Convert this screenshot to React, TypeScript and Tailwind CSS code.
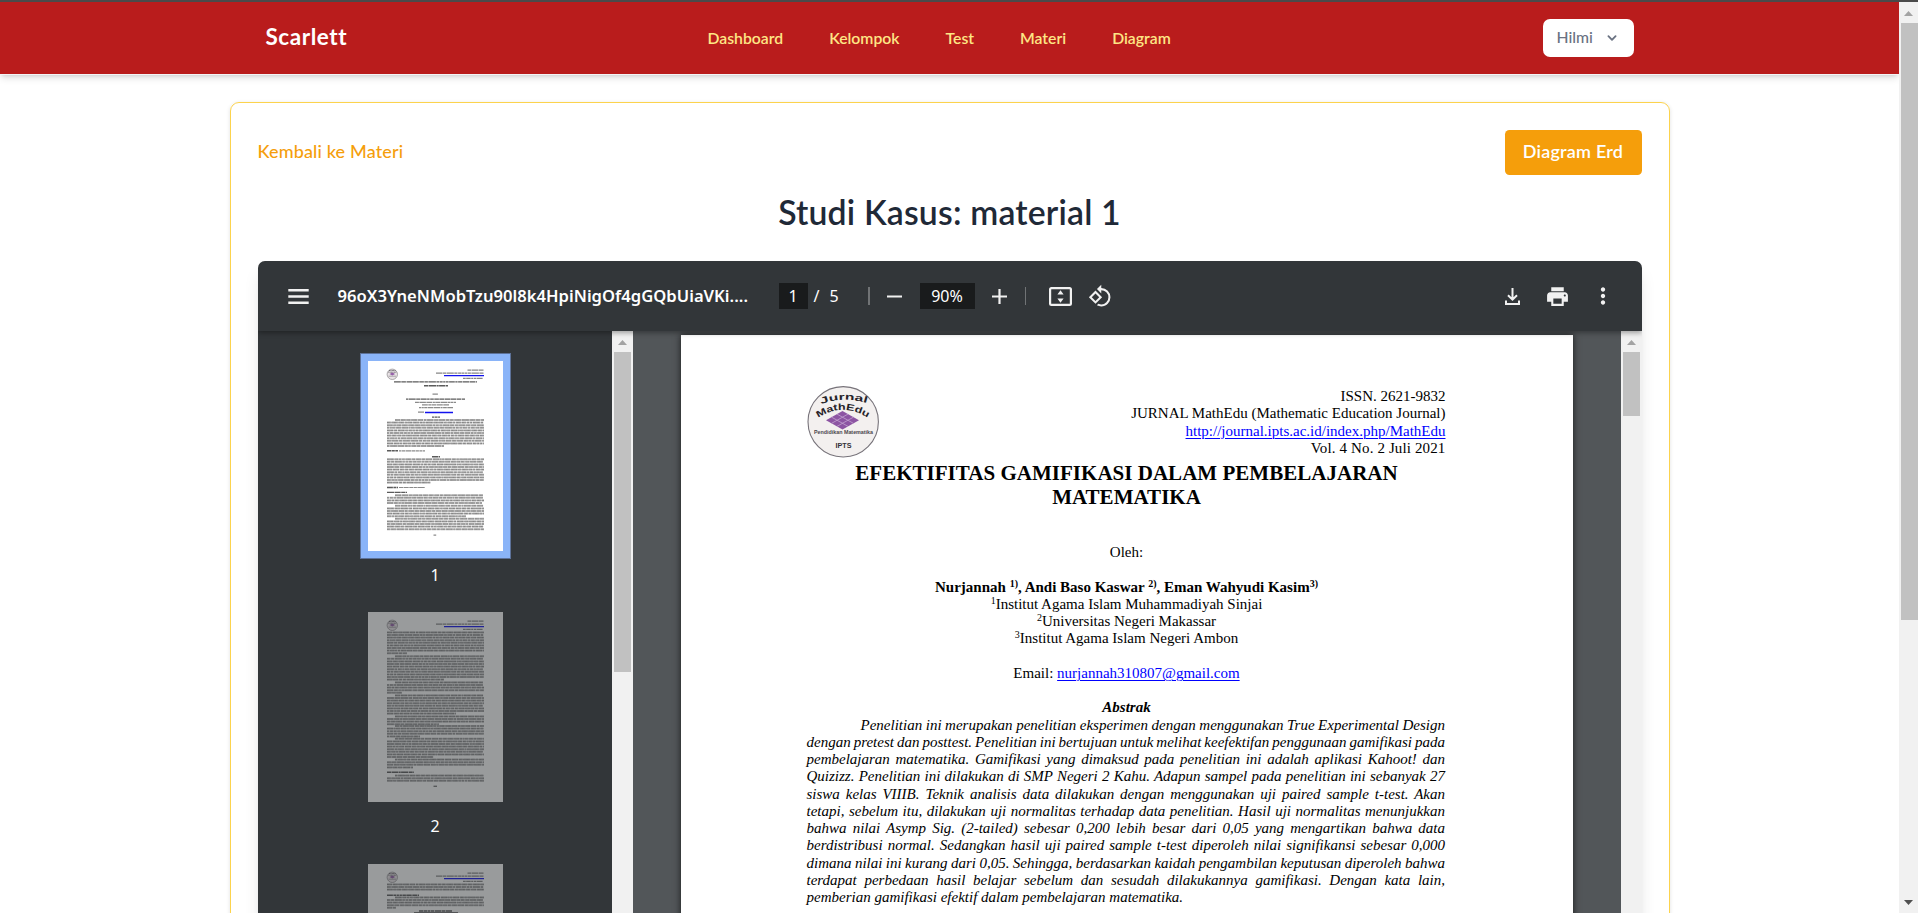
import type { ReactNode } from "react";
import { MdMoreVert, MdPrint, MdRotate90DegreesCcw } from "react-icons/md";

const NAV = ["Dashboard", "Kelompok", "Test", "Materi", "Diagram"];

const ABSTRACT = [
  "dengan pretest dan posttest. Penelitian ini bertujuan untuk melihat keefektifan penggunaan gamifikasi pada",
  "pembelajaran matematika. Gamifikasi yang dimaksud pada penelitian ini adalah aplikasi Kahoot! dan",
  "Quizizz. Penelitian ini dilakukan di SMP Negeri 2 Kahu. Adapun sampel pada penelitian ini sebanyak 27",
  "siswa kelas VIIIB. Teknik analisis data dilakukan dengan menggunakan uji paired sample t-test. Akan",
  "tetapi, sebelum itu, dilakukan uji normalitas terhadap data penelitian. Hasil uji normalitas menunjukkan",
  "bahwa nilai Asymp Sig. (2-tailed) sebesar 0,200 lebih besar dari 0,05 yang mengartikan bahwa data",
  "berdistribusi normal. Sedangkan hasil uji paired sample t-test diperoleh nilai signifikansi sebesar 0,000",
  "dimana nilai ini kurang dari 0,05. Sehingga, berdasarkan kaidah pengambilan keputusan diperoleh bahwa",
  "terdapat perbedaan hasil belajar sebelum dan sesudah dilakukannya gamifikasi. Dengan kata lain,",
];

function Header() {
  return (
    <header className="relative z-10 flex h-[73px] shrink-0 justify-center border-b border-gray-100 bg-[#b91c1c] shadow-[0_4px_7px_-1px_rgba(0,0,0,0.13),0_2px_4px_-2px_rgba(0,0,0,0.13)]">
      <div className="flex w-[1440px] items-center pr-9 pl-9">
        <div className="w-[442px] pb-0.5 text-[22.5px] font-bold tracking-[0.55px] text-white">Scarlett</div>
        <nav className="flex gap-[46px] text-[15.75px] font-semibold text-amber-200">
          {NAV.map((n) => (
            <a key={n}>{n}</a>
          ))}
        </nav>
        <button className="ml-auto flex h-[38px] w-[91px] items-center rounded-[7px] bg-white pb-0.5 pl-[14px] text-left text-[15.75px] font-medium text-gray-500">
          <span className="w-[46px]">Hilmi</span>
          <svg viewBox="0 0 20 20" className="mt-0.5 size-[18px] fill-gray-500">
            <path
              fillRule="evenodd"
              clipRule="evenodd"
              d="M5.293 7.293a1 1 0 011.414 0L10 10.586l3.293-3.293a1 1 0 111.414 1.414l-4 4a1 1 0 01-1.414 0l-4-4a1 1 0 010-1.414z"
            />
          </svg>
        </button>
      </div>
    </header>
  );
}

function Arrow({ down = false }: { down?: boolean }) {
  return (
    <svg viewBox="0 0 9 5" className={down ? "h-[5px] w-[9px] rotate-180 fill-[#505050]" : "h-[5px] w-[9px] fill-[#a3a3a3]"}>
      <path d="M4.5 0 9 5H0z" />
    </svg>
  );
}

function Toolbar() {
  return (
    <div className="relative z-10 flex h-[70px] shrink-0 items-center bg-[#323639] pl-[30px] font-['Noto_Sans',sans-serif] text-base text-white shadow-[0_2px_5px_rgba(0,0,0,0.35)]">
      <svg viewBox="0 0 21 15" className="h-[15px] w-[21px] shrink-0 fill-[#f1f1f1]">
        <path d="M.3 0h20.4v2.4H.3zM.3 6.3h20.4v2.4H.3zM.3 12.6h20.4V15H.3z" />
      </svg>
      <div className="ml-[29px] w-[412px] whitespace-nowrap text-[16.6px] font-semibold tracking-[0.02px]">
        96oX3YneNMobTzu90l8k4HpiNigOf4gGQbUiaVKi....
      </div>
      <div className="ml-[29px] flex h-[26px] w-[29px] items-center justify-center bg-[#191b1c]">1</div>
      <div className="ml-1.5 w-4">/</div>
      <div className="w-[38px]">5</div>
      <div className="h-[18px] w-0.5 bg-[#707375]" />
      <svg viewBox="0 0 15 15" className="ml-[17px] h-[15px] w-[15px] fill-[#f1f1f1]">
        <path d="M0 6.4h15v2.2H0z" />
      </svg>
      <div className="ml-[18px] flex h-[26px] w-[55px] items-center justify-center bg-[#191b1c]">90%</div>
      <svg viewBox="0 0 15 15" className="ml-[17px] h-[15px] w-[15px] fill-[#f1f1f1]">
        <path d="M0 6.4h6.4V0h2.2v6.4H15v2.2H8.6V15H6.4V8.6H0z" />
      </svg>
      <div className="ml-[18px] h-[18px] w-px bg-[#707375]" />
      <svg viewBox="0 0 23 19" className="ml-[23px] h-[19px] w-[23px]">
        <rect x="1.1" y="1.1" width="20.8" height="16.8" rx="1.4" fill="none" stroke="#f1f1f1" strokeWidth="2.2" />
        <path d="M11.5 3.2 14.6 7.6H8.4zM11.5 15.8 8.4 11.4h6.2z" fill="#f1f1f1" />
      </svg>
      <MdRotate90DegreesCcw className="ml-4 size-[24.5px] text-[#f1f1f1]" />
      <svg viewBox="0 0 15 17" className="mr-[25px] ml-auto h-[17px] w-[15px]" fill="none" stroke="#f1f1f1" strokeWidth="2">
        <path d="M7.5 0v12M3 7.2l4.5 4.5L12 7.2M1 12.6V16h13v-3.4" />
      </svg>
      <MdPrint className="size-[25px] text-[#f1f1f1]" />
      <MdMoreVert className="mr-[26px] ml-5 size-[26px] text-[#f1f1f1]" />
    </div>
  );
}

type Block = { y: number; n: number; indent?: boolean; end?: number };

function words(x: number, end: number, y: number, seed: number) {
  let d = "";
  let s = seed * 7919 + 13;
  while (x < end - 0.8) {
    s = (s * 1103515245 + 12345) % 2147483648;
    const w = Math.min(2 + ((s >> 8) % 1000) / 180, end - x);
    d += `M${x.toFixed(1)} ${y.toFixed(1)}h${w.toFixed(1)}`;
    x += w + 0.5;
  }
  return d;
}

function Paper({ blocks, bold = [], children }: { blocks: Block[]; bold?: number[][]; children?: ReactNode }) {
  const body = blocks
    .map((b, k) =>
      Array.from({ length: b.n }, (_, i) =>
        words(i === 0 && b.indent ? 27 : 19, i === b.n - 1 && b.end ? b.end : 116, b.y + i * 2.6, k * 31 + i + 1),
      ).join(""),
    )
    .join("");
  return (
    <svg viewBox="0 0 135 190" className="block h-[190px] w-[135px] bg-white">
      <circle cx="24.3" cy="13.3" r="5.2" fill="#e9e4e6" stroke="#8d888c" strokeWidth="0.7" />
      <path d="M21 9.5h6.6M20.3 11.2h8" stroke="#6a656b" strokeWidth="0.9" strokeDasharray="1 .4" />
      <path d="M24.3 11.4l2.8 1.6-2.8 1.6-2.8-1.6z" fill="#9560a8" />
      <path d="M20.5 15.2h7.6" stroke="#8a858b" strokeWidth="0.7" />
      <path d={words(99.5, 115.5, 9.2, 2) + words(68, 115.5, 12.2, 5) + words(95, 115.5, 17.3, 8)} stroke="#868686" strokeWidth="1.2" />
      <path d="M76 14.6h40" stroke="#1212ee" strokeWidth="1.4" />
      <path d={body} stroke="#444" strokeWidth="2" opacity="0.42" />
      <path d={body} stroke="#333" strokeWidth="1.1" strokeDasharray=".8 .5" opacity="0.4" />
      {bold.map(([x, end, y]) => (
        <path key={y} d={words(x, end, y, y)} stroke="#3f3f3f" strokeWidth="1.4" opacity="0.85" />
      ))}
      {children}
    </svg>
  );
}

function Thumbnails() {
  return (
    <aside className="flex w-[354px] shrink-0 flex-col items-center bg-[#323639] pt-[22px] pl-px font-['Noto_Sans',sans-serif] text-base text-white">
      <div className="border border-[#5d7299] bg-[#8ab4f8] p-[7px]">
        <Paper
          bold={[
            [26, 109, 20.9],
            [56, 80, 24.7],
            [38, 97, 38.1],
            [64, 72, 56.1],
            [19, 30, 89.8],
            [64, 72, 95.8],
            [19, 30, 126.5],
            [19, 39, 131.4],
          ]}
          blocks={[
            { y: 59, n: 11, indent: true, end: 76 },
            { y: 98.2, n: 10, end: 63 },
            { y: 134.2, n: 4, indent: true, end: 114 },
            { y: 144.8, n: 5, indent: true, end: 98 },
            { y: 157.8, n: 5, indent: true },
          ]}
        >
          <path
            d={
              words(64.5, 70, 33.2, 1) + words(47, 88, 41.3, 2) + words(54, 81, 43.8, 3) + words(51, 85, 46.6, 4) +
              words(50, 56, 51.2, 5) + words(31, 57, 89.8, 6) + words(31, 57, 126.5, 7) + words(65.5, 69, 174.2, 8)
            }
            stroke="#8a8a8a"
            strokeWidth="1.2"
          />
          <path d="M57 51.5h28" stroke="#1212ee" strokeWidth="1.5" />
        </Paper>
      </div>
      <div className="mt-1.5 h-[47px] leading-[21px]">1</div>
      <div className="opacity-50">
        <Paper
          bold={[[19, 46, 160.3]]}
          blocks={[
            { y: 20.4, n: 9, end: 39 },
            { y: 44.2, n: 10, indent: true, end: 76 },
            { y: 70.4, n: 5, indent: true, end: 35 },
            { y: 83.4, n: 8, indent: true, end: 88 },
            { y: 104.4, n: 4, indent: true, end: 71 },
            { y: 114, n: 5, indent: true, end: 52 },
            { y: 126.8, n: 8, indent: true, end: 65 },
            { y: 147.6, n: 4, indent: true, end: 45 },
            { y: 163.6, n: 3, indent: true },
          ]}
        >
          <path d="M65.5 174.3h3.5" stroke="#7a7a7a" strokeWidth="1.4" />
        </Paper>
      </div>
      <div className="mt-[13px] h-[49px] leading-[23px]">2</div>
      <div className="opacity-50">
        <Paper
          bold={[
            [19, 51, 31.2],
            [51, 84, 47],
          ]}
          blocks={[
            { y: 20.4, n: 3 },
            { y: 33.4, n: 5, indent: true, end: 28 },
          ]}
        >
          <path d="M46 48.2h44v6H46z" fill="#444" />
        </Paper>
      </div>
    </aside>
  );
}

function Logo() {
  return (
    <svg viewBox="0 0 73 73" className="absolute top-[51px] left-[126px] size-[73px] font-['Liberation_Sans',sans-serif] font-bold">
      <defs>
        <path id="arc-top" d="M14 18.5Q36 9.5 61 17.5" />
        <path id="arc-mid" d="M11 32Q36 15.5 62 32.5" />
      </defs>
      <circle cx="36.2" cy="35.8" r="35.2" fill="#f3f0ef" stroke="#77737a" strokeWidth="1.1" />
      <text fontSize="9" fill="#262329">
        <textPath href="#arc-top" textLength="47" lengthAdjust="spacingAndGlyphs">Jurnal</textPath>
      </text>
      <text fontSize="9" fill="#262329">
        <textPath href="#arc-mid" textLength="53" lengthAdjust="spacingAndGlyphs">MathEdu</textPath>
      </text>
      <path d="M35.5 25 52 34.3 35.5 43.4 19 34.3z" fill="#8d55a3" />
      <path d="M30 28.1 46.5 37.4M24.5 31.1 41 40.4M41 28.1 24.5 37.4M46.5 31.1 30 40.4" stroke="#c3a3cf" strokeWidth="0.8" />
      <text x="7" y="48" fontSize="5.2" fill="#4b474d" textLength="59" lengthAdjust="spacingAndGlyphs">Pendidikan Matematika</text>
      <text x="28.5" y="62" fontSize="6.4" fill="#333036" textLength="16" lengthAdjust="spacingAndGlyphs">IPTS</text>
    </svg>
  );
}

function Link({ children }: { children: ReactNode }) {
  return <span className="text-[#0000ff] underline decoration-1 underline-offset-2">{children}</span>;
}

function Sup({ children }: { children: ReactNode }) {
  return <span className="relative -top-[5px] text-[10px] leading-none">{children}</span>;
}

function Document() {
  return (
    <div className="flex min-w-0 grow justify-center overflow-hidden bg-[#525659] pt-1">
      <div className="relative h-[1261px] w-[892px] shrink-0 bg-white px-[126px] pt-[53px] font-['Liberation_Serif',serif] text-[15px] leading-[17.25px] text-black shadow-[0_0_7px_rgba(0,0,0,0.7)]">
        <Logo />
        <div className="pr-px text-right">
          <p>ISSN. 2621-9832</p>
          <p>JURNAL MathEdu (Mathematic Education Journal)</p>
          <p>
            <Link>http://journal.ipts.ac.id/index.php/MathEdu</Link>
          </p>
          <p className="tracking-[0.13px]">Vol. 4 No. 2 Juli 2021</p>
        </div>
        <div className="text-center">
          <h2 className="mt-[4px] text-[21px] leading-[24.15px] font-bold tracking-[0.02px] whitespace-nowrap">
            EFEKTIFITAS GAMIFIKASI DALAM PEMBELAJARAN
            <br />
            MATEMATIKA
          </h2>
          <p className="mt-[34.8px]">Oleh:</p>
          <p className="mt-[17.25px] font-bold">
            Nurjannah <Sup>1)</Sup>, Andi Baso Kaswar <Sup>2)</Sup>, Eman Wahyudi Kasim<Sup>3)</Sup>
          </p>
          <p>
            <Sup>1</Sup>Institut Agama Islam Muhammadiyah Sinjai
          </p>
          <p>
            <Sup>2</Sup>Universitas Negeri Makassar
          </p>
          <p>
            <Sup>3</Sup>Institut Agama Islam Negeri Ambon
          </p>
          <p className="mt-[17.25px]">
            Email: <Link>nurjannah310807@gmail.com</Link>
          </p>
          <p className="mt-[17.25px] font-bold italic">Abstrak</p>
        </div>
        <div className="w-[638.5px] text-justify whitespace-nowrap italic [text-align-last:justify] [word-spacing:-1px]">
          <p className="pl-[54px]">Penelitian ini merupakan penelitian eksperimen dengan menggunakan True Experimental Design</p>
          {ABSTRACT.map((line) => (
            <p key={line}>{line}</p>
          ))}
          <p className="[text-align-last:left] [word-spacing:0px]">pemberian gamifikasi efektif dalam pembelajaran matematika.</p>
        </div>
      </div>
    </div>
  );
}

function Viewer() {
  return (
    <div className="mt-[29px] flex h-[800px] flex-col overflow-hidden rounded-[7px] shadow-[0_11px_17px_-3px_rgba(0,0,0,0.12),0_4px_7px_-4px_rgba(0,0,0,0.12)]">
      <Toolbar />
      <div className="flex min-h-0 grow overflow-hidden">
        <Thumbnails />
        <div className="flex w-[21px] shrink-0 flex-col items-center bg-[#f1f1f1] pt-[9px]">
          <Arrow />
          <div className="mt-[7px] h-80 w-[17px] shrink-0 bg-[#c1c1c1]" />
        </div>
        <Document />
        <div className="flex w-[21px] shrink-0 flex-col items-center bg-[#f1f1f1] pt-[9px]">
          <Arrow />
          <div className="mt-[7px] h-16 w-[17px] shrink-0 bg-[#c1c1c1]" />
        </div>
      </div>
    </div>
  );
}

export default function App() {
  return (
    <div className="flex h-[913px] w-[1918px] flex-col overflow-hidden border-t-2 border-[#4a4a4a] bg-white font-['Lato',sans-serif]">
      <div className="flex min-h-0 grow">
        <div className="flex w-[1899px] shrink-0 flex-col overflow-hidden">
          <Header />
          <main className="mx-auto mt-[27px] h-[1100px] w-[1440px] shrink-0 rounded-[9px] border border-[#fcd34d] px-[27px] pt-[27px] shadow-[0_1px_4px_rgba(0,0,0,0.12)]">
            <div className="flex h-[45px] items-center justify-between">
              <a className="pb-[3px] text-lg font-medium tracking-[0.14px] text-[#f59e0b]">Kembali ke Materi</a>
              <a className="flex h-[45px] w-[137px] items-center justify-center rounded-[4.5px] bg-[#f59e0b] pb-[3px] text-lg font-semibold tracking-[0.2px] text-white">
                Diagram Erd
              </a>
            </div>
            <h1 className="mt-[17px] text-center text-[33.75px] leading-10 font-semibold tracking-[0.18px] text-[#1f2937]">Studi Kasus: material 1</h1>
            <Viewer />
          </main>
        </div>
        <div className="flex w-[19px] flex-col items-center bg-[#f1f1f1] pt-[9px] pb-[8px]">
          <Arrow />
          <div className="mt-[7px] h-[597px] w-[17px] shrink-0 translate-x-px bg-[#c1c1c1]" />
          <div className="mt-auto">
            <Arrow down />
          </div>
        </div>
      </div>
    </div>
  );
}
